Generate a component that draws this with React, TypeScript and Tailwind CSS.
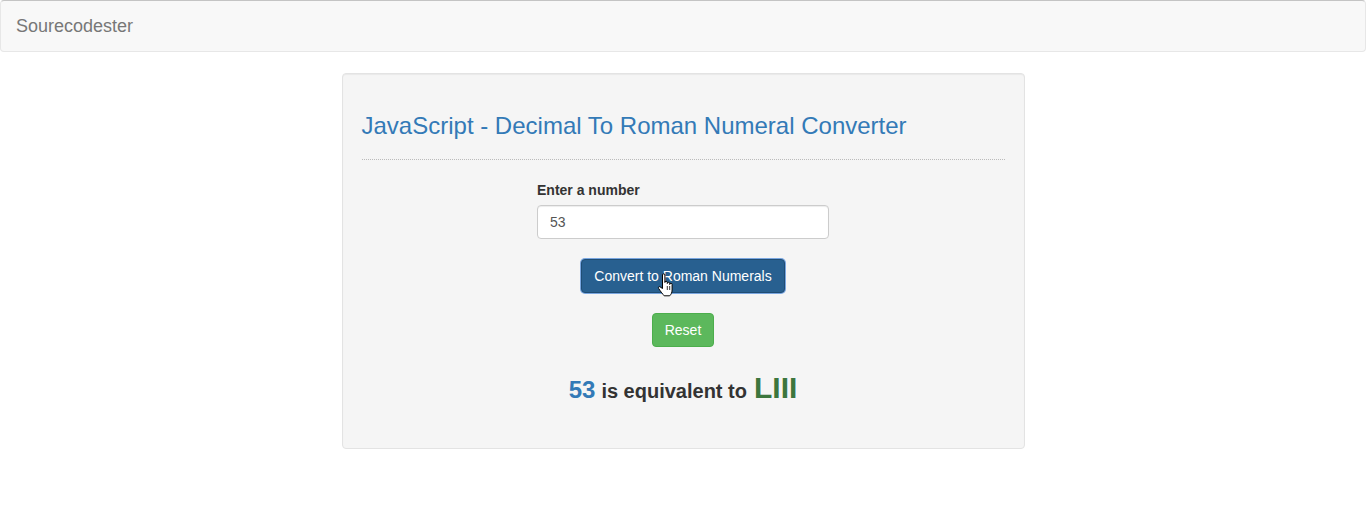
import { useState } from "react";

function toRoman(n: number): string {
    const map: [number, string][] = [
        [1000, "M"], [900, "CM"], [500, "D"], [400, "CD"],
        [100, "C"], [90, "XC"], [50, "L"], [40, "XL"],
        [10, "X"], [9, "IX"], [5, "V"], [4, "IV"], [1, "I"],
    ];
    let out = "";
    for (const [v, s] of map) {
        while (n >= v) {
            out += s;
            n -= v;
        }
    }
    return out;
}

function HandCursor() {
    return (
        <svg width="17" height="24" viewBox="0 0 17 24" className="absolute left-[75px] top-[13px] pointer-events-none">
            <path
                d="M5.5 2 a1.2 1.2 0 0 1 2.4 0 V9.5 a1.2 1.2 0 0 1 2.4 0 V10.5 a1.2 1.2 0 0 1 2.4 0 V11.5 a1.2 1.2 0 0 1 2.4 0 V17 c0 2.8 -1.2 4.6 -2.4 5.8 H7.2 c-1.2 -1.3 -3.4 -4 -5.6 -7.4 c-0.7 -1.1 0.5 -2.3 1.5 -1.5 L5.5 15.5 Z"
                fill="#fff"
                stroke="#000"
                strokeWidth="1"
                strokeLinejoin="round"
            />
            <path d="M10.3 13 V17 M12.7 13 V17" stroke="#000" strokeWidth="0.8" />
        </svg>
    );
}

export default function App() {
    const [value, setValue] = useState("53");
    const [result, setResult] = useState<{ num: string; roman: string } | null>({ num: "53", roman: "LIII" });

    const convert = () => {
        const n = parseInt(value, 10);
        if (!isNaN(n) && n > 0) setResult({ num: String(n), roman: toRoman(n) });
    };

    const reset = () => {
        setValue("");
        setResult(null);
    };

    return (
        <div className="min-h-screen bg-white text-[14px] text-[#333]" style={{ fontFamily: '"Liberation Sans", Arial, sans-serif' }}>
            {/* Navbar */}
            <nav className="h-[52px] bg-[#f8f8f8] border border-[#e7e7e7] border-t-[#c4c4c4] rounded-[4px] flex items-center">
                <span className="px-[15px] text-[18px] leading-[20px] text-[#777]">Sourecodester</span>
            </nav>

            {/* Well */}
            <div className="w-[683px] mx-auto mt-[21px] bg-[#f5f5f5] border border-[#e3e3e3] rounded-[4px] shadow-[inset_0_1px_1px_rgba(0,0,0,0.05)] px-[19px] pt-[19px] pb-[19px]">
                <h3 className="mt-[20px] text-[24px] leading-[26px] text-[#337ab7]">
                    JavaScript - Decimal To Roman Numeral Converter
                </h3>
                <hr className="mt-[20px] border-0 border-t border-dotted border-[#bbb]" />

                <div className="w-[292px] mx-auto mt-[20px] flex flex-col">
                    <label className="font-bold leading-[20px] mb-[5px]">Enter a number</label>
                    <input
                        type="number"
                        value={value}
                        onChange={(e) => setValue(e.target.value)}
                        className="h-[34px] px-[12px] bg-white border border-[#ccc] rounded-[4px] text-[#555] outline-none shadow-[inset_0_1px_1px_rgba(0,0,0,0.075)] [appearance:textfield] [&::-webkit-inner-spin-button]:appearance-none"
                    />
                </div>

                <div className="flex justify-center mt-[20px]">
                    <button
                        onClick={convert}
                        className="relative h-[34px] px-[12px] bg-[#286090] border border-[#204d74] rounded-[4px] text-white leading-[20px] ring-1 ring-[#79a6e0]"
                    >
                        Convert to Roman Numerals
                        <HandCursor />
                    </button>
                </div>

                <div className="flex justify-center mt-[20px]">
                    <button
                        onClick={reset}
                        className="h-[34px] px-[12px] bg-[#5cb85c] border border-[#4cae4c] rounded-[4px] text-white leading-[20px]"
                    >
                        Reset
                    </button>
                </div>

                <div className="mt-[23px] h-[40px] flex items-baseline justify-center font-bold leading-[36px]">
                    {result && (
                        <>
                            <span className="text-[24px] text-[#337ab7]">{result.num}</span>
                            <span className="text-[20px] text-[#333] ml-[6px]">is equivalent to</span>
                            <span className="text-[30px] text-[#3c763d] ml-[7px]">{result.roman}</span>
                        </>
                    )}
                </div>
                <div className="h-[19px]" />
            </div>
        </div>
    );
}
